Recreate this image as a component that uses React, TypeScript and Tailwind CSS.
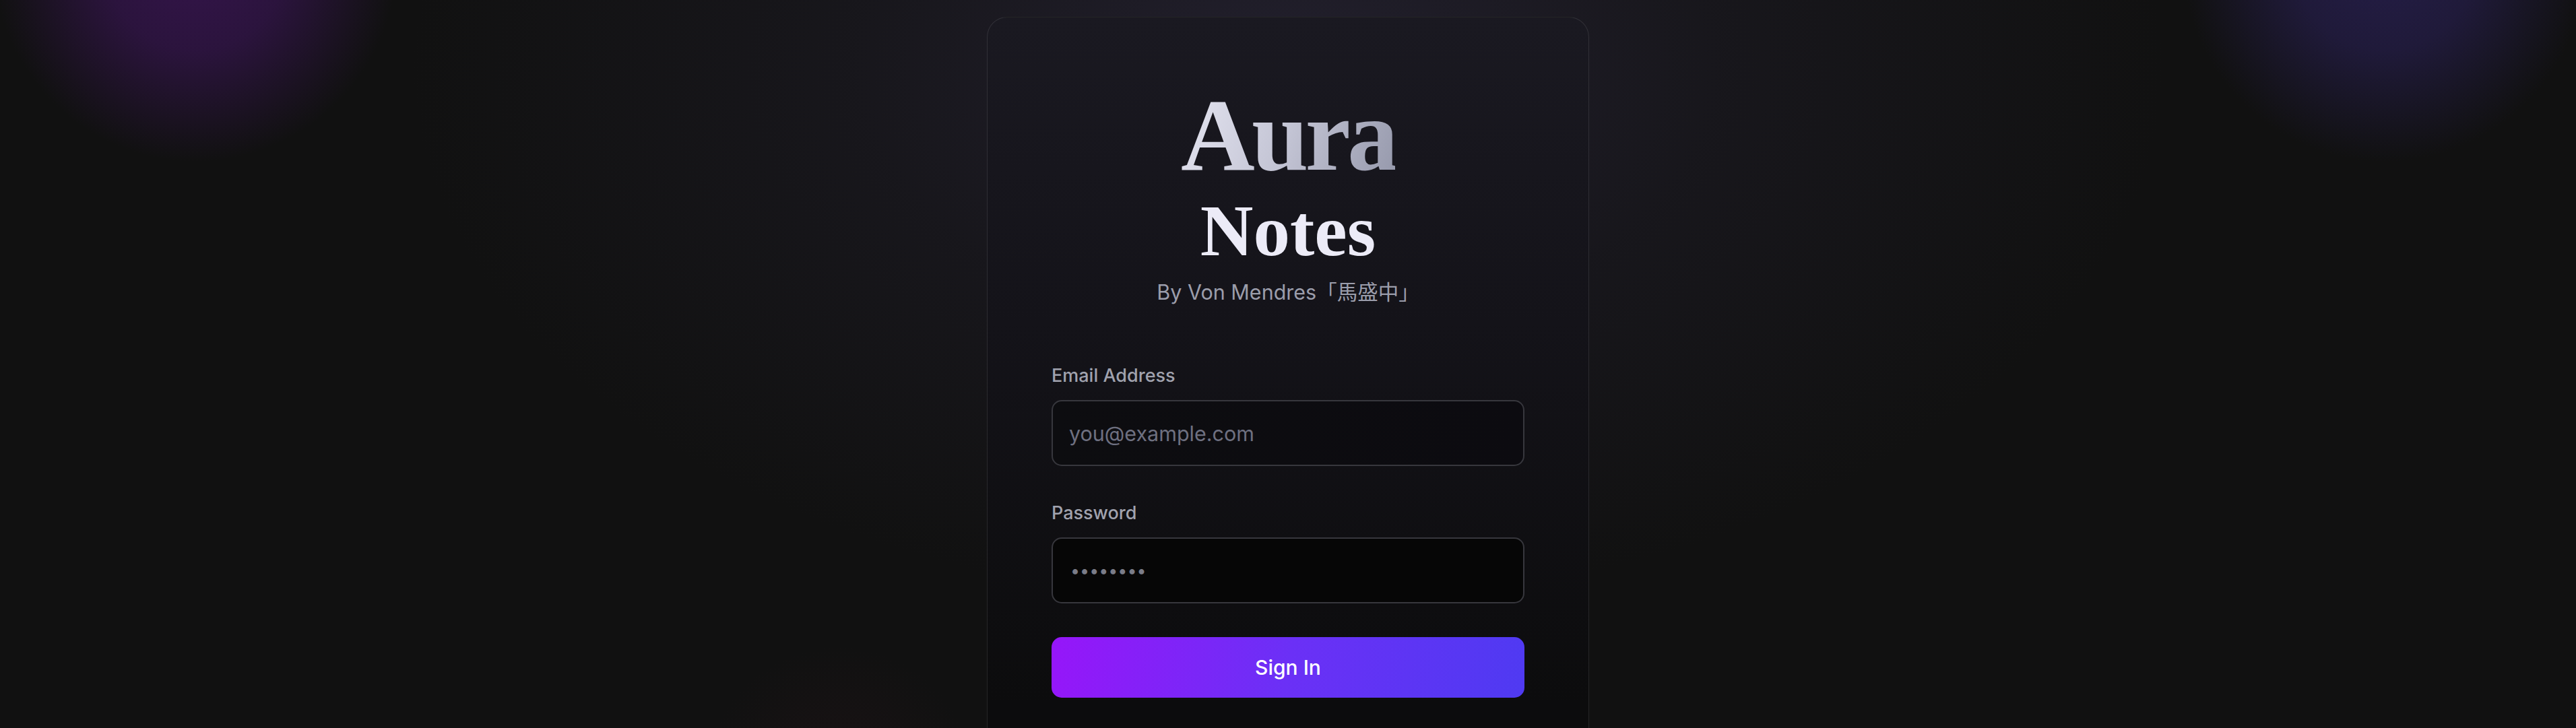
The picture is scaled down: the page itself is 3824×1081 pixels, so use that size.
import { useState } from "react";

const LoginCard = () => {
  const [email, setEmail] = useState("");

  return (
    <div className="relative z-10 mt-[25px] w-[894px] rounded-[30px] border border-white/[0.1] bg-[linear-gradient(180deg,#1a1921_0%,#141319_40%,#0c0c0d_90%)] px-[95px] pt-[99px] pb-[120px]">
      <div className="flex flex-col items-center">
        <h1 className="bg-[linear-gradient(110deg,#e6e6f2_0%,#c3c4d4_50%,#9598ab_100%)] bg-clip-text font-['Liberation_Serif',serif] text-[152px] leading-none font-bold tracking-[-5px] text-transparent">
          Aura
        </h1>
        <h2 className="mt-[11px] font-['Liberation_Serif',serif] text-[109px] leading-none font-bold text-[#ecebf7]">
          Notes
        </h2>
        <p className="mt-[17px] text-[30.5px] leading-[40px] text-[#9b9dab]">
          By Von Mendres「馬盛中」
        </p>
      </div>

      <form className="mt-[86px] flex flex-col" onSubmit={(e) => e.preventDefault()}>
        <label className="text-[27px] leading-[36px] font-medium text-[#a0a2ae]">Email Address</label>
        <input
          type="email"
          value={email}
          onChange={(e) => setEmail(e.target.value)}
          placeholder="you@example.com"
          className="mt-[18px] h-[98px] rounded-[15px] border-2 border-[#37373d] bg-[linear-gradient(90deg,#0d0d10,#0c0b10)] pl-[24px] text-[30.5px] text-[#d4d4dc] outline-none placeholder:text-[#6e7080]"
        />

        <label className="mt-[52px] text-[27px] leading-[36px] font-medium text-[#a0a2ae]">Password</label>
        <input
          type="password"
          defaultValue="password"
          className="mt-[18px] h-[98px] rounded-[15px] border-2 border-[#37373d] bg-[#060606] pl-[26px] text-[25px] text-[#7a7c88] outline-none"
        />

        <button
          type="submit"
          className="mt-[50px] h-[90px] rounded-[15px] bg-[linear-gradient(100deg,#9616f9_0%,#6b30f6_50%,#4f3af2_100%)] text-[30px] font-medium text-white"
        >
          Sign In
        </button>
      </form>
    </div>
  );
};

const App = () => {
  return (
    <div className="relative flex min-h-screen w-full justify-center overflow-hidden bg-[#111111] font-['Inter','Noto_Sans_CJK_TC',sans-serif]">
      {/* background glows */}
      <div className="pointer-events-none absolute left-[-10px] top-[-360px] h-[600px] w-[600px] rounded-full bg-[radial-gradient(closest-side,rgba(52,20,74,1)_0%,rgba(46,20,66,0.9)_45%,rgba(17,17,17,0)_100%)]" />
      <div className="pointer-events-none absolute left-[3240px] top-[-360px] h-[600px] w-[600px] rounded-full bg-[radial-gradient(closest-side,rgba(36,29,70,1)_0%,rgba(33,27,62,0.9)_45%,rgba(17,17,17,0)_100%)]" />
      <div className="pointer-events-none absolute left-[1045px] top-[960px] h-[400px] w-[400px] rounded-full bg-[radial-gradient(closest-side,rgba(36,20,24,0.45)_0%,rgba(17,17,17,0)_100%)]" />
      <div className="pointer-events-none absolute left-[612px] top-[-700px] h-[1600px] w-[2600px] rounded-full bg-[radial-gradient(closest-side,rgba(36,33,48,0.9)_0%,rgba(30,28,38,0.5)_50%,rgba(17,17,17,0)_100%)]" />

      <LoginCard />
    </div>
  );
};

export default App;
